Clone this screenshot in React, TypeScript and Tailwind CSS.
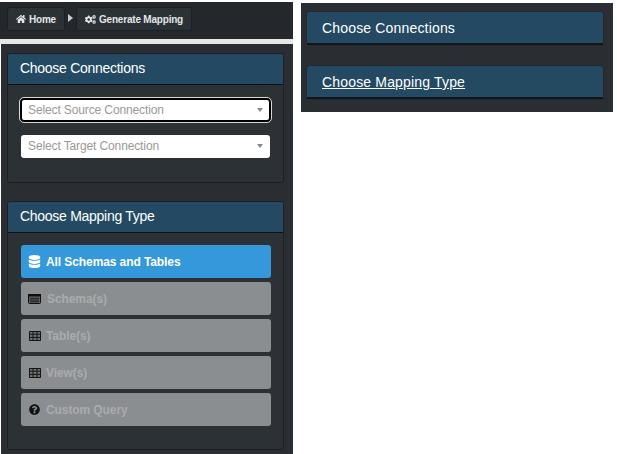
import { FaHome, FaCogs, FaDatabase, FaQuestionCircle } from "react-icons/fa";
import type { ReactNode } from "react";

function Panel({ title, children, bodyClass }: { title: string; children: ReactNode; bodyClass: string }) {
  return (
    <section className="rounded-[3px] border border-[#1c1f23] bg-[#2c3136] overflow-hidden">
      <h2 className="h-[31px] bg-[#244a63] border-b border-[#0e1114] pl-[12px] text-[14px] tracking-[-0.28px] leading-[29px] text-white font-normal">{title}</h2>
      <div className={bodyClass}>{children}</div>
    </section>
  );
}

function Select({ label, focused }: { label: string; focused?: boolean }) {
  return (
    <div className={focused
      ? "flex h-[24px] items-center justify-between rounded-[4px] bg-white border-2 border-black outline outline-1 outline-[#d8d8d8] pl-[6px] pr-[6px] pb-[1px] text-[12px] tracking-[-0.12px] text-[#999]"
      : "flex h-[23px] items-center justify-between rounded-[3px] bg-white mx-[1px] pl-[7px] pr-[7px] pb-[1px] text-[12px] tracking-[-0.12px] text-[#999]"}>
      <span>{label}</span>
      <span className="w-0 h-0 border-x-[3.5px] border-x-transparent border-t-[4px] border-t-[#888]" />
    </div>
  );
}

function TableIcon() {
  return (
    <svg width="12" height="10" viewBox="0 0 12 10" aria-hidden="true">
      <rect x="0" y="0" width="12" height="10" rx="1" fill="#6f7174" />
      <path d="M0.5 0.5H11.5V9.5H0.5ZM0 3.2H12M0 6.4H12M4 0V10M8 0V10" fill="none" stroke="#141414" strokeWidth="1" />
    </svg>
  );
}

function ListIcon() {
  return (
    <svg width="13" height="10" viewBox="0 0 13 10" aria-hidden="true">
      <rect x="0.5" y="0.5" width="12" height="9" rx="1" fill="#5c5e60" stroke="#0d0d0d" />
      <rect x="0" y="0" width="13" height="2.4" fill="#0d0d0d" />
      <path d="M2 4.3H11M2 6H11M2 7.7H11" stroke="#1b1b1b" strokeWidth="0.9" />
    </svg>
  );
}

function MapBtn({ icon, label, active, gap }: { icon: ReactNode; label: string; active?: boolean; gap: string }) {
  return (
    <div className={`flex h-[33px] items-center rounded-[3px] pl-[7px] text-[12px] tracking-[-0.09px] font-bold ${active ? "bg-[#3498db] text-white" : "bg-[#8b8e91] text-[#a9abad]"}`}>
      <span className={`flex w-[13px] justify-center text-[12px] ${active ? "text-white" : "text-[#111]"}`}>{icon}</span>
      <span className={`pt-[1px] ${gap}`}>{label}</span>
    </div>
  );
}

function Crumb({ icon, label }: { icon: ReactNode; label: string }) {
  return (
    <div className="flex h-[24px] items-center gap-[3px] rounded-[3px] border border-[#1c1f23] bg-[#2c3136] px-[8px] text-[10px] tracking-[-0.2px] font-bold text-[#e4e6e8]">
      {icon}
      <span>{label}</span>
    </div>
  );
}

function Bar({ title, underline }: { title: string; underline?: boolean }) {
  return (
    <div className="h-[33px] rounded-[2px] bg-[#244a63] border-b-2 border-[#10151a] pl-[15px] text-[14px] tracking-[0.17px] leading-[32px] text-white shadow-[0_0_1px_#000]">
      <span className={underline ? "underline" : ""}>{title}</span>
    </div>
  );
}

export default function App() {
  return (
    <div className="flex h-[454px] w-[617px] bg-white font-['Liberation_Sans',Arial,sans-serif]">
      <div className="w-[293px] pt-[2px]">
        <nav className="flex h-[37px] items-start bg-[#24282d] pl-[7px] pt-[5px]">
          <Crumb icon={<FaHome className="text-[10px]" />} label="Home" />
          <span className="mx-[3px] mt-[7px] h-0 w-0 border-y-[4px] border-y-transparent border-l-[5px] border-l-[#c9cbcd]" />
          <Crumb icon={<FaCogs className="text-[11px]" />} label="Generate Mapping" />
        </nav>
        <div className="h-[5px] bg-[#e6e6e6]" />
        <main className="ml-[1px] h-[410px] bg-[#2a2e33] pl-[6px] pr-[9px] pt-[9px]">
          <Panel title="Choose Connections" bodyClass="h-[97px] px-[12px] pt-[13px] flex flex-col gap-[13px]">
            <Select label="Select Source Connection" focused />
            <Select label="Select Target Connection" />
          </Panel>
          <div className="h-[18px]" />
          <Panel title="Choose Mapping Type" bodyClass="h-[216px] pl-[13px] pr-[12px] pt-[12px] flex flex-col gap-[4px]">
            <MapBtn active icon={<FaDatabase className="text-[13px]" />} label="All Schemas and Tables" gap="ml-[5px]" />
            <MapBtn icon={<ListIcon />} label="Schema(s)" gap="ml-[6px]" />
            <MapBtn icon={<TableIcon />} label="Table(s)" gap="ml-[5px]" />
            <MapBtn icon={<TableIcon />} label="View(s)" gap="ml-[5px]" />
            <MapBtn icon={<FaQuestionCircle className="text-[11px]" />} label="Custom Query" gap="ml-[5px]" />
          </Panel>
        </main>
      </div>
      <div className="ml-[8px] mt-[3px] h-[109px] w-[312px] bg-[#2a2e33] pl-[6px] pr-[10px] pt-[9px] flex flex-col gap-[21px] self-start">
        <Bar title="Choose Connections" />
        <Bar title="Choose Mapping Type" underline />
      </div>
    </div>
  );
}
